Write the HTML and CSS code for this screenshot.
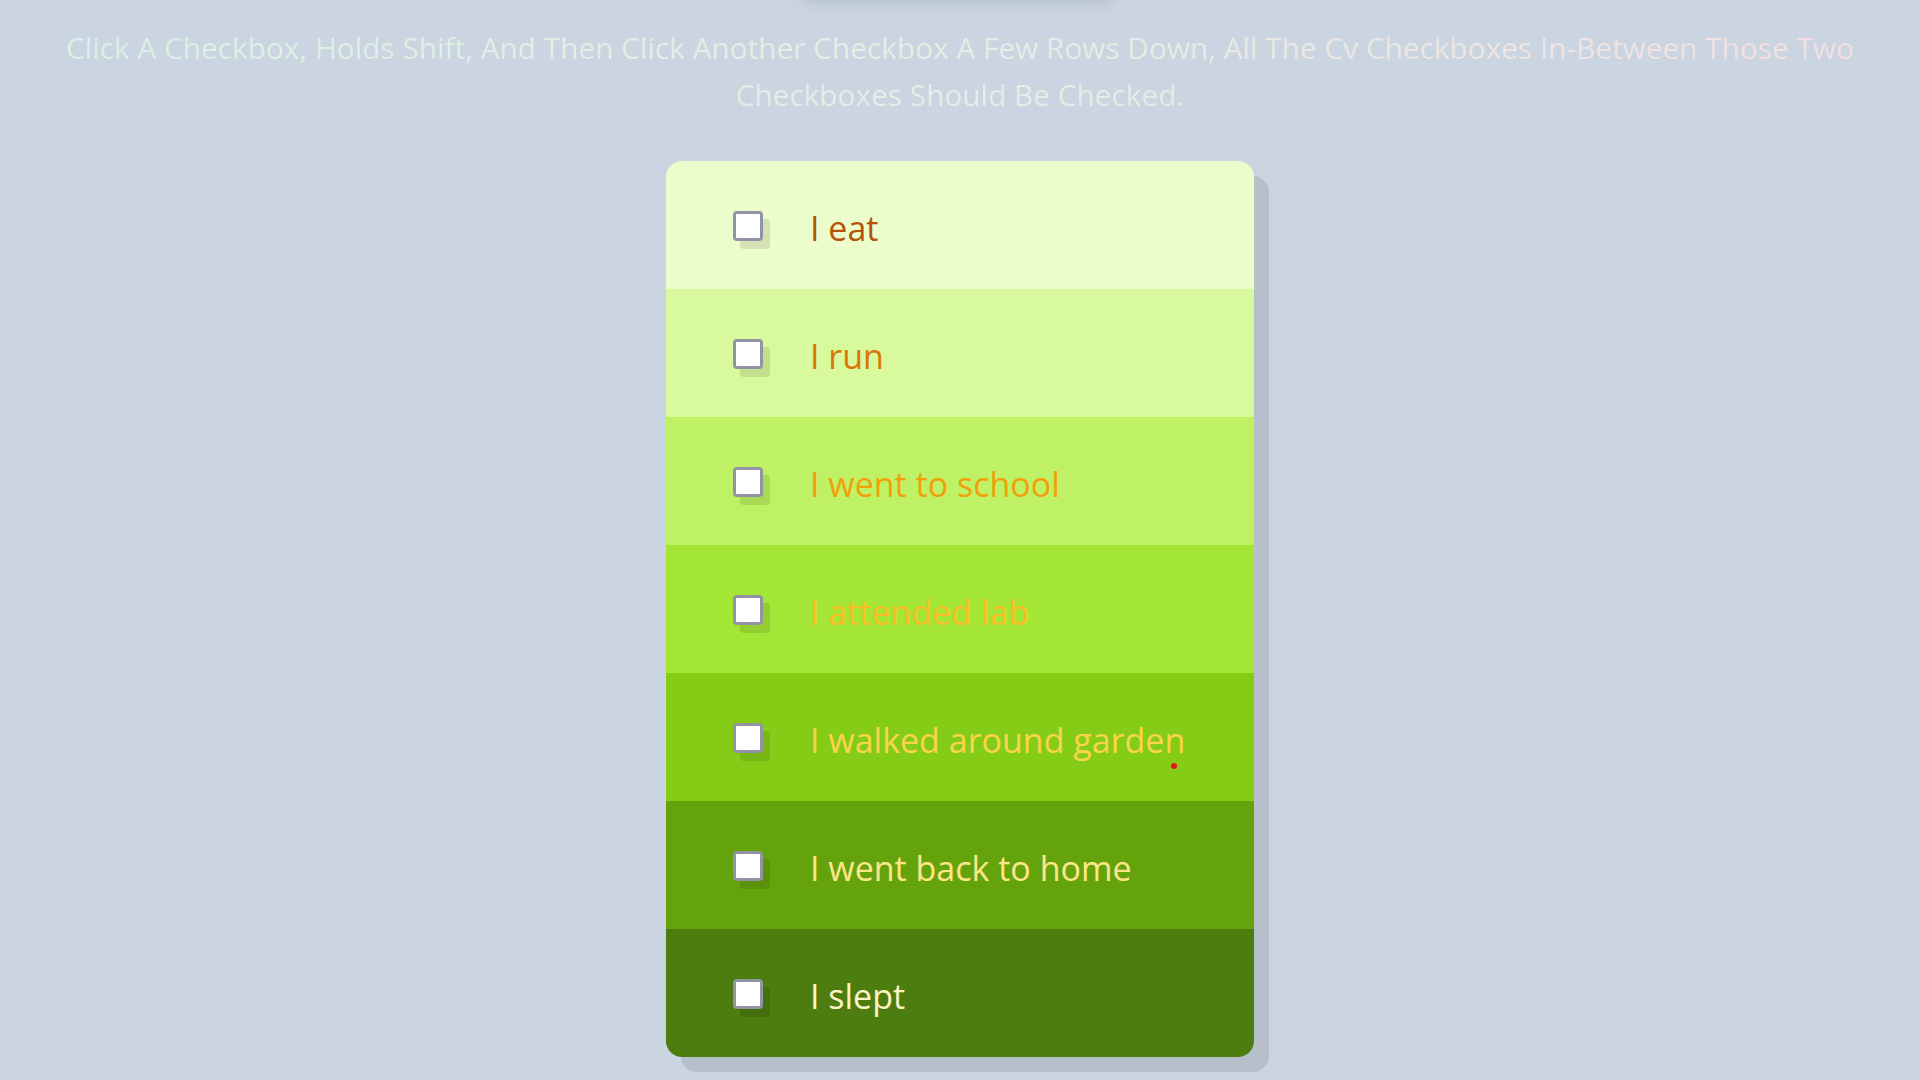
FILE: index.html
```html
<!DOCTYPE html>
<html lang="en">
<head>
<meta charset="utf-8">
<title>Checkboxes</title>
<link rel="stylesheet" href="styles.css">
</head>
<body>
<div class="top-ghost"></div>
<main class="page">
  <p class="hint">click a checkbox, holds shift, and then click another checkbox a few rows down, all the cv checkboxes in-between those two checkboxes should be checked.</p>
  <div class="inbox">
    <label class="item item-1"><input type="checkbox"><span class="box"></span><span class="txt">I eat</span></label>
    <label class="item item-2"><input type="checkbox"><span class="box"></span><span class="txt">I run</span></label>
    <label class="item item-3"><input type="checkbox"><span class="box"></span><span class="txt">I went to school</span></label>
    <label class="item item-4"><input type="checkbox"><span class="box"></span><span class="txt">I attended lab</span></label>
    <label class="item item-5"><input type="checkbox"><span class="box"></span><span class="txt">I walked around garden</span><span class="cursor-dot"></span></label>
    <label class="item item-6"><input type="checkbox"><span class="box"></span><span class="txt">I went back to home</span></label>
    <label class="item item-7"><input type="checkbox"><span class="box"></span><span class="txt">I slept</span></label>
  </div>
</main>
</body>
</html>
```
FILE: styles.css
```css
html, body {
  margin: 0;
  padding: 0;
}
body {
  background: #cbd5e1;
  font-family: "Open Sans", "Noto Sans", sans-serif;
  min-height: 1080px;
  overflow: hidden;
}
.top-ghost {
  position: absolute;
  top: -40px;
  left: 800px;
  width: 316px;
  height: 40px;
  border-radius: 10px;
  box-shadow: 0 2px 14px rgba(80, 90, 110, 0.18);
}
.page {
  display: flex;
  flex-direction: column;
  align-items: center;
  padding-top: 24px;
}
.hint {
  margin: 0;
  width: 1820px;
  text-align: center;
  text-transform: capitalize;
  font-size: 29.8px;
  line-height: 47px;
  font-weight: 400;
  background: linear-gradient(90deg, #dcefe4 0%, #e4eee4 50%, #f4dfe0 100%);
  -webkit-background-clip: text;
  background-clip: text;
  color: transparent;
}
.inbox {
  margin-top: 43px;
  width: 588px;
  border-radius: 16px;
  overflow: hidden;
  box-shadow: 15px 15px 0 rgba(0, 0, 0, 0.1);
  display: flex;
  flex-direction: column;
}
.item {
  position: relative;
  height: 128px;
  display: flex;
  align-items: center;
  padding-left: 67px;
  box-sizing: border-box;
}
.item input {
  display: none;
}
.box {
  width: 30px;
  height: 30px;
  margin-top: 1px;
  box-sizing: border-box;
  border: 3px solid #9294a3;
  border-radius: 4px;
  background: #ffffff;
  box-shadow: 7px 8px 0 rgba(0, 0, 0, 0.1);
  flex: none;
}
.txt {
  margin-left: 47px;
  font-size: 34px;
  line-height: 1;
  padding-top: 6px;
}
.item-1 { background: #ecfccb; color: #b45309; }
.item-2 { background: #d9f99d; color: #d97706; }
.item-3 { background: #bef264; color: #f59e0b; }
.item-4 { background: #a3e635; color: #fbbf24; }
.item-5 { background: #84cc16; color: #fcd34d; }
.item-6 { background: #65a30d; color: #fde68a; }
.item-7 { background: #4d7c0f; color: #fef3c7; }
.cursor-dot {
  position: absolute;
  left: 505px;
  top: 90px;
  width: 6px;
  height: 6px;
  border-radius: 50%;
  background: #e5141c;
}
```
